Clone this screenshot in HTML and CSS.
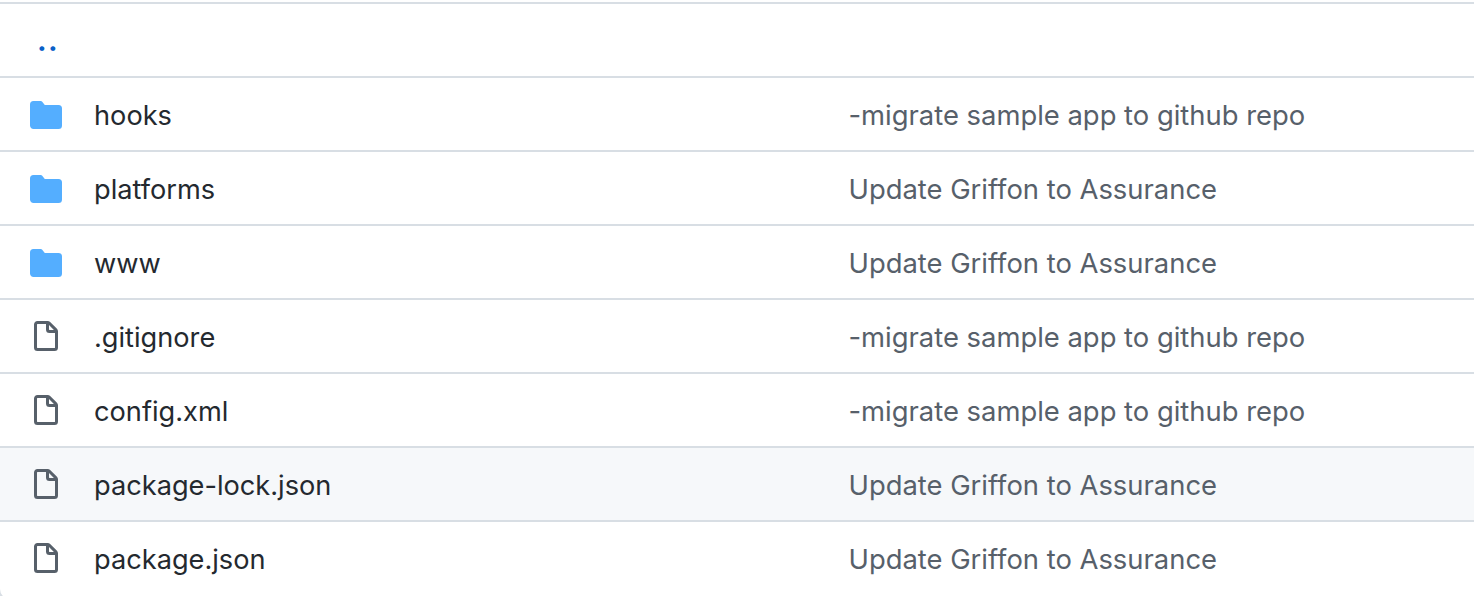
FILE: index.html
```html
<!DOCTYPE html>
<html lang="en">
<head>
<meta charset="utf-8">
<title>Files</title>
<link rel="stylesheet" href="styles.css">
</head>
<body>
<svg class="defs" width="0" height="0" aria-hidden="true">
<symbol id="folder" viewBox="0 0 16 16"><path d="M1.75 1A1.75 1.75 0 0 0 0 2.75v10.5C0 14.216.784 15 1.75 15h12.5A1.75 1.75 0 0 0 16 13.25v-8.5A1.75 1.75 0 0 0 14.25 3H7.5a.25.25 0 0 1-.2-.1l-.9-1.2C6.07 1.26 5.55 1 5 1H1.75Z"/></symbol>
<symbol id="file" viewBox="0 0 16 16"><path d="M3.75 1.5a.25.25 0 0 0-.25.25v11.5c0 .138.112.25.25.25h8.5a.25.25 0 0 0 .25-.25V6H9.75A1.75 1.75 0 0 1 8 4.25V1.5H3.75Zm5.75.56v2.19c0 .138.112.25.25.25h2.19L9.5 2.06ZM2 1.75C2 .784 2.784 0 3.75 0h5.086c.464 0 .909.184 1.237.513l3.414 3.414c.329.328.513.773.513 1.237v8.086A1.75 1.75 0 0 1 12.25 15h-8.5A1.75 1.75 0 0 1 2 13.25V1.75Z"/></symbol>
</svg>
<main class="list">
<div class="row up"><a class="dots">..</a></div>
<div class="row"><svg class="icon dir"><use href="#folder"/></svg><span class="name">hooks</span><span class="msg">-migrate sample app to github repo</span></div>
<div class="row"><svg class="icon dir"><use href="#folder"/></svg><span class="name">platforms</span><span class="msg">Update Griffon to Assurance</span></div>
<div class="row"><svg class="icon dir"><use href="#folder"/></svg><span class="name">www</span><span class="msg">Update Griffon to Assurance</span></div>
<div class="row"><svg class="icon doc"><use href="#file"/></svg><span class="name">.gitignore</span><span class="msg">-migrate sample app to github repo</span></div>
<div class="row"><svg class="icon doc"><use href="#file"/></svg><span class="name">config.xml</span><span class="msg">-migrate sample app to github repo</span></div>
<div class="row hover"><svg class="icon doc"><use href="#file"/></svg><span class="name">package-lock.json</span><span class="msg">Update Griffon to Assurance</span></div>
<div class="row"><svg class="icon doc"><use href="#file"/></svg><span class="name">package.json</span><span class="msg">Update Griffon to Assurance</span></div>
</main>
</body>
</html>
```
FILE: styles.css
```css
* { box-sizing: border-box; }
html, body { margin: 0; height: 100%; background: #fff; overflow: hidden; }
body { font-family: Inter, "Liberation Sans", sans-serif; font-size: 27.2px; color: #24292f; }
.defs { position: absolute; }
.list { height: 601px; margin-left: -2px; padding-top: 2px; border-left: 2px solid #d8dee4; border-bottom: 2px solid #d8dee4; border-bottom-left-radius: 12px; overflow: hidden; }
.row { display: flex; align-items: center; height: 74px; padding-left: 30px; padding-top: 2px; border-top: 2px solid #d8dee4; }
.hover { background: #f6f8fa; }
.icon { width: 32px; height: 32px; flex: none; }
.dir { fill: #54aeff; }
.doc { fill: #57606a; }
.name { width: 754.5px; margin-left: 32px; flex: none; }
.msg { color: #57606a; font-size: 27.4px; }
.dots { color: #0a60c8; margin-left: 7px; margin-top: -1px; font-weight: 700; font-size: 29px; letter-spacing: 1.2px; }
```
